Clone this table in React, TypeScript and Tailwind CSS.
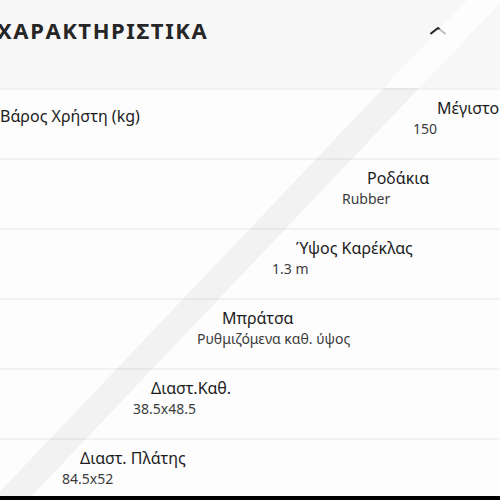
import React from 'react'

type Spec = {
  label: string
  value: string
  labelPad: string
  valuePad: string
  wrap?: string
}

const SPECS: Spec[] = [
  { label: 'Μέγιστο', wrap: 'Βάρος Χρήστη (kg)', value: '150', labelPad: 'pl-[437px]', valuePad: 'pl-[413px]' },
  { label: 'Ροδάκια', value: 'Rubber', labelPad: 'pl-[367px]', valuePad: 'pl-[342px]' },
  { label: 'Ύψος Καρέκλας', value: '1.3 m', labelPad: 'pl-[296px]', valuePad: 'pl-[272px]' },
  { label: 'Μπράτσα', value: 'Ρυθμιζόμενα καθ. ύψος', labelPad: 'pl-[222px]', valuePad: 'pl-[197px]' },
  { label: 'Διαστ.Καθ.', value: '38.5x48.5', labelPad: 'pl-[151px]', valuePad: 'pl-[133px]' },
  { label: 'Διαστ. Πλάτης', value: '84.5x52', labelPad: 'pl-[80px]', valuePad: 'pl-[62px]' },
]

// band runs roughly x = 485 - 0.95y, ~36px wide
const bandX = (y: number) => 485 - 0.95 * y

function Band() {
  const pts = (y0: number, y1: number) =>
    `${bandX(y0) - 18},${y0} ${bandX(y0) + 18},${y0} ${bandX(y1) + 18},${y1} ${bandX(y1) - 18},${y1}`
  return (
    <svg className="pointer-events-none absolute inset-0" width="500" height="496" viewBox="0 0 500 496">
      <polygon points={pts(0, 88)} fill="#ffffff" opacity="0.7" />
      <polygon points={pts(88, 496)} fill="#000000" opacity="0.045" />
    </svg>
  )
}

export default function App() {
  return (
    <div className="w-[500px] h-[500px] bg-black" style={{ fontFamily: "'Noto Sans', 'Open Sans', sans-serif" }}>
      <div className="relative h-[496px] overflow-hidden bg-[#fdfdfd]">
        {/* Header */}
        <div className="h-[88px] bg-[#f7f7f7] flex items-start justify-between pt-[16px] pr-[53px]">
          <h2 className="-ml-[3px] text-[22px] leading-[28px] font-bold tracking-[1.6px] text-[#262626] whitespace-nowrap">
            ΧΑΡΑΚΤΗΡΙΣΤΙΚΑ
          </h2>
          <svg className="mt-[10px]" width="18" height="9" viewBox="0 0 18 9" fill="none">
            <path d="M2 7.5 L9 2 L16 7.5" stroke="#222" strokeWidth="2" strokeLinecap="round" strokeLinejoin="round" />
          </svg>
        </div>

        {/* Rows */}
        {SPECS.map(s => (
          <div key={s.label} className="relative h-[70px] border-t-2 border-[#f2f2f2] pt-[8px] overflow-hidden">
            <div className={`${s.labelPad} text-[16px] leading-[20px] text-[#1c1c1c] whitespace-nowrap`}>
              {s.label}
            </div>
            {s.wrap && (
              <div className="absolute left-0 top-[16px] text-[16px] leading-[20px] text-[#1c1c1c] whitespace-nowrap">
                {s.wrap}
              </div>
            )}
            <div className={`${s.valuePad} mt-[2px] text-[14px] leading-[18px] text-[#3c3c3c] whitespace-nowrap`}>
              {s.value}
            </div>
          </div>
        ))}

        <Band />
      </div>
    </div>
  )
}
